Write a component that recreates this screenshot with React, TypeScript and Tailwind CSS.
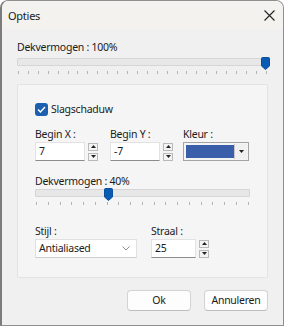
import React from 'react';

const Thumb = () => (
  <svg width="9" height="13" viewBox="0 0 9 13" className="block">
    <path d="M1.5 0.5 H7.5 Q8.5 0.5 8.5 1.5 V9 L4.5 12.5 L0.5 9 V1.5 Q0.5 0.5 1.5 0.5 Z" fill="#0a5bb4" stroke="#0a4f9c" strokeWidth="1" />
  </svg>
);

const Slider = ({ width, pos, ticks }: { width: number; pos: number; ticks: number }) => (
  <div style={{ width }} className="relative">
    <div className="h-[8px] mt-[2px] bg-[#e7e7e7] border border-[#d6d6d6] rounded-[1px]" />
    <div className="absolute top-[-1px]" style={{ left: pos - 4 }}>
      <Thumb />
    </div>
    <div className="flex justify-between mt-[5px] px-[1px]">
      {Array.from({ length: ticks }).map((_, i) => (
        <div key={i} className="w-px h-[3px] bg-[#b4b4b4]" />
      ))}
    </div>
  </div>
);

const Spinner = () => (
  <div className="flex flex-col gap-[2px] ml-[3px]">
    {[0, 1].map((i) => (
      <div key={i} className="w-[10px] h-[8px] bg-[#f4f4f4] border border-[#b9b9b9] flex items-center justify-center">
        <svg width="5" height="3" viewBox="0 0 5 3">
          {i === 0 ? <path d="M0 3 L2.5 0 L5 3 Z" fill="#222" /> : <path d="M0 0 L2.5 3 L5 0 Z" fill="#222" />}
        </svg>
      </div>
    ))}
  </div>
);

const NumField = ({ value, width }: { value: string; width: number }) => (
  <div className="flex items-center">
    <div style={{ width }} className="h-[19px] bg-white border border-[#e2e2e2] border-b-[#8c8c8c] flex items-center pl-[3px]">
      {value}
    </div>
    <Spinner />
  </div>
);

export default function App() {
  return (
    <div className="w-[284px] h-[326px] bg-[#f0f0f0] border border-[#8f8f8f] border-l-[2px] border-l-[#7c7c7c] rounded-t-[8px] overflow-hidden flex flex-col font-['Noto_Sans',sans-serif] text-[10.5px] tracking-[-0.25px] leading-none text-[#1b1b1b]">
      {/* title bar */}
      <div className="h-[28px] flex items-center justify-between pl-[6px] pr-[8px] bg-[#f3f2ee] shrink-0">
        <span className="text-[11px]">Opties</span>
        <svg width="11" height="11" viewBox="0 0 11 11">
          <path d="M0.5 0.5 L10.5 10.5 M10.5 0.5 L0.5 10.5" stroke="#222" strokeWidth="1.1" />
        </svg>
      </div>

      <div className="pl-[15px] pt-[12px]">
        <div className="h-[12px] flex items-center">Dekvermogen : 100%</div>
        <div className="mt-[5px]">
          <Slider width={251} pos={248} ticks={26} />
        </div>
      </div>

      {/* group panel */}
      <div className="mx-[15px] mt-[10px] h-[194px] bg-[#f5f5f5] border border-[#e3e3e3] rounded-[2px] pl-[17px] pt-[18px]">
        <div className="flex items-center gap-[3px]">
          <div className="w-[13px] h-[13px] rounded-[3px] bg-[#1c5fae] flex items-center justify-center">
            <svg width="9" height="7" viewBox="0 0 9 7">
              <path d="M1 3.6 L3.4 6 L8 1" stroke="#fff" strokeWidth="1.4" fill="none" />
            </svg>
          </div>
          <span>Slagschaduw</span>
        </div>

        <div className="flex mt-[12px]">
          <div className="w-[75px]">
            <div className="h-[12px] flex items-center">Begin X :</div>
            <div className="mt-[2px]">
              <NumField value="7" width={50} />
            </div>
          </div>
          <div className="w-[73px]">
            <div className="h-[12px] flex items-center">Begin Y :</div>
            <div className="mt-[2px]">
              <NumField value="-7" width={50} />
            </div>
          </div>
          <div>
            <div className="h-[12px] flex items-center">Kleur :</div>
            <div className="mt-[2px] w-[66px] h-[19px] border border-[#a3a3a3] bg-[#f4f4f4] flex items-center">
              <div className="ml-[2px] w-[48px] h-[13px] bg-[#3a5ea9]" />
              <div className="ml-auto mr-[1px] w-[13px] h-[15px] bg-[#f0f0f0] border-l border-[#c8c8c8] flex items-center justify-center">
                <svg width="5" height="3" viewBox="0 0 5 3">
                  <path d="M0 0 L2.5 3 L5 0 Z" fill="#222" />
                </svg>
              </div>
            </div>
          </div>
        </div>

        <div className="mt-[14px] h-[12px] flex items-center">Dekvermogen : 40%</div>
        <div className="mt-[2px]">
          <Slider width={215} pos={73} ticks={19} />
        </div>

        <div className="flex mt-[20px]">
          <div className="w-[116px]">
            <div className="h-[12px] flex items-center">Stijl :</div>
            <div className="mt-[2px] w-[102px] h-[19px] bg-white border border-[#e0e0e0] border-b-[#cfcfcf] flex items-center pl-[3px] pr-[6px]">
              <span>Antialiased</span>
              <svg className="ml-auto" width="8" height="5" viewBox="0 0 8 5">
                <path d="M0.5 0.5 L4 4 L7.5 0.5" stroke="#8a8a8a" strokeWidth="1" fill="none" />
              </svg>
            </div>
          </div>
          <div>
            <div className="h-[12px] flex items-center">Straal :</div>
            <div className="mt-[2px]">
              <NumField value="25" width={45} />
            </div>
          </div>
        </div>
      </div>

      <div className="flex justify-end gap-[13px] pr-[15px] mt-[12px]">
        <button className="w-[64px] h-[21px] bg-[#fdfdfd] border border-[#d3d3d3] border-b-[#bdbdbd] rounded-[4px]">Ok</button>
        <button className="w-[64px] h-[21px] bg-[#fdfdfd] border border-[#d3d3d3] border-b-[#bdbdbd] rounded-[4px]">Annuleren</button>
      </div>
    </div>
  );
}
